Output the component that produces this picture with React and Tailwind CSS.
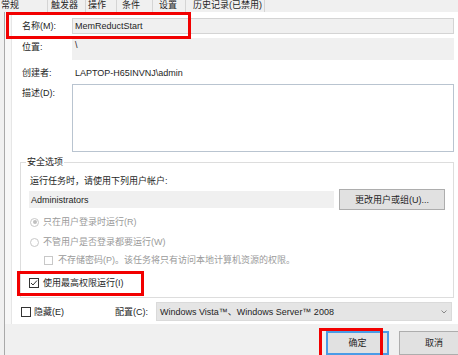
const tabs = [
  { label: '常规', cls: 'w-[48px] pl-[1px]' },
  { label: '触发器', cls: 'w-[38px] pl-[3px]' },
  { label: '操作', cls: 'w-[31px] pl-[2px]' },
  { label: '条件', cls: 'w-[36px] pl-[5px]' },
  { label: '设置', cls: 'w-[33px] pl-[6px]' },
  { label: '历史记录(已禁用)', cls: 'w-[79px] pl-[7px]' },
];

function Check({ checked, disabled, className = '' }) {
  return (
    <div
      className={`shrink-0 flex items-center justify-center border bg-white ${
        disabled ? 'border-[#c8c8c8]' : 'border-[#333333]'
      } ${className}`}
    >
      {checked && (
        <svg width="8" height="8" viewBox="0 0 8 8">
          <polyline points="1,4 3,6 7,1.5" fill="none" stroke="#333" strokeWidth="1" />
        </svg>
      )}
    </div>
  );
}

function Radio({ selected }) {
  return (
    <div className="shrink-0 w-[9px] h-[9px] rounded-full border border-[#c8c8c8] bg-white flex items-center justify-center">
      {selected && <div className="w-[4px] h-[4px] rounded-full bg-[#c0c0c0]" />}
    </div>
  );
}

function RedBox({ className }) {
  return <div className={`absolute border-[3px] border-[#f20000] pointer-events-none ${className}`} />;
}

export default function App() {
  return (
    <div className="relative w-[458px] h-[355px] overflow-hidden bg-[#f0f0f0] text-[9px] leading-[12px] text-[#1e1e1e] font-['Liberation_Sans','Noto_Sans_CJK_SC',sans-serif]">
      {/* tab strip */}
      <div className="flex h-[12px] overflow-hidden">
        {tabs.map((t) => (
          <div key={t.label} className={`shrink-0 h-[12px] border-r border-[#d4d4d4] whitespace-nowrap ${t.cls}`}>
            <div className="leading-[10px]">{t.label}</div>
          </div>
        ))}
      </div>

      <div className="flex h-[343px]">
        <div className="w-[4px] shrink-0" />
        <div className="flex-1 min-w-0 flex flex-col border-l border-[#a9a9a9]">
          <div className="flex h-[314px]">
            <div className="w-[6px] shrink-0 bg-[#f7f7f7]" />
            <div className="flex-1 min-w-0 flex flex-col bg-white border-l border-[#e6e6e6] pl-[8px] pr-[4px]">
              {/* name */}
              <div className="mt-[6px] h-[16px] flex items-center">
                <div className="w-[50px] shrink-0 ml-[2px]">名称(M):</div>
                <div className="flex-1 h-full flex items-center border border-[#d4d4d4] bg-[#f0f0f0] pl-[2px]">
                  MemReductStart
                </div>
              </div>
              {/* location */}
              <div className="mt-[4px] h-[22px] flex items-start">
                <div className="w-[50px] shrink-0 ml-[2px] pt-[3px]">位置:</div>
                <div className="flex-1 h-full bg-[#f0f0f0] pl-[3px] pt-[1px]">\</div>
              </div>
              {/* author */}
              <div className="mt-[2px] h-[22px] flex items-center">
                <div className="w-[50px] shrink-0 ml-[2px]">创建者:</div>
                <div className="pl-[3px]">LAPTOP-H65INVNJ\admin</div>
              </div>
              {/* description */}
              <div className="h-[68px] flex items-start">
                <div className="w-[50px] shrink-0 ml-[2px] pt-[3px]">描述(D):</div>
                <div className="flex-1 h-full border border-[#b9c4d0] bg-white" />
              </div>

              {/* security options */}
              <fieldset className="mt-[4px] min-w-0 border border-[#dddddd] p-0">
                <legend className="ml-[5px] px-[1px] leading-[12px]">安全选项</legend>
                <div className="pl-[9px] pr-[7px] pb-[8px]">
                  <div className="mt-[7px] h-[12px]">运行任务时，请使用下列用户帐户:</div>
                  <div className="mt-[2px] h-[21px] flex items-center">
                    <div className="-ml-[1px] shrink-0 w-[305px] h-[17px] flex items-center bg-[#f0f0f0] pl-[2px]">
                      Administrators
                    </div>
                    <div className="ml-[5px] shrink-0 w-[106px] h-[21px] flex items-center justify-center border border-[#adadad] bg-[#e1e1e1]">
                      更改用户或组(U)...
                    </div>
                  </div>
                  <div className="mt-[6px] h-[12px] flex items-center gap-[4px] text-[#9a9a9a]">
                    <Radio selected />
                    <span>只在用户登录时运行(R)</span>
                  </div>
                  <div className="mt-[8px] h-[12px] flex items-center gap-[4px] text-[#9a9a9a]">
                    <Radio />
                    <span>不管用户是否登录都要运行(W)</span>
                  </div>
                  <div className="mt-[6px] ml-[14px] h-[12px] flex items-center gap-[5px] text-[#9a9a9a] whitespace-nowrap">
                    <Check disabled className="w-[9px] h-[9px]" />
                    <span>不存储密码(P)。该任务将只有访问本地计算机资源的权限。</span>
                  </div>
                  <div className="mt-[11px] -ml-[1px] h-[12px] flex items-center gap-[4px]">
                    <Check checked className="w-[10px] h-[10px]" />
                    <span>使用最高权限运行(I)</span>
                  </div>
                </div>
              </fieldset>

              {/* hidden / configure */}
              <div className="mt-[4px] h-[19px] flex items-center">
                <div className="w-[95px] shrink-0 flex items-center pl-[1px] gap-[3px]">
                  <Check className="w-[10px] h-[10px]" />
                  <span>隐藏(E)</span>
                </div>
                <div className="w-[41px] shrink-0">配置(C):</div>
                <div className="flex-1 mr-[2px] h-full flex items-center justify-between border border-[#dadada] bg-[#e5e5e5] pl-[3px] pr-[4px]">
                  <span>Windows Vista™、Windows Server™ 2008</span>
                  <svg width="6" height="4" viewBox="0 0 6 4">
                    <polyline points="0.5,0.5 3,3 5.5,0.5" fill="none" stroke="#888" strokeWidth="1" />
                  </svg>
                </div>
              </div>
            </div>
          </div>

          {/* dialog buttons */}
          <div className="flex mt-[7px]">
            <div className="ml-[321px] shrink-0 w-[63px] h-[24px] flex items-center justify-center border-2 border-[#4a9be6] bg-[#e1e1e1]">
              确定
            </div>
            <div className="ml-[10px] shrink-0 w-[70px] h-[24px] flex items-center justify-center border border-[#adadad] bg-[#e1e1e1]">
              取消
            </div>
          </div>
        </div>
      </div>

      <RedBox className="left-[6px] top-[12px] w-[185px] h-[27px]" />
      <RedBox className="left-[17px] top-[271px] w-[127px] h-[25px]" />
      <RedBox className="left-[319px] top-[328px] w-[64px] h-[30px]" />
    </div>
  );
}
